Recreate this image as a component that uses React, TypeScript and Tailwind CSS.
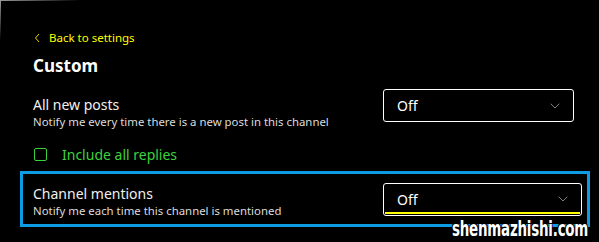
import { ChevronDown } from 'lucide-react'

function Select({ wide, focused }: { wide?: boolean; focused?: boolean }) {
  return (
    <div
      className={`relative flex h-[33px] items-center justify-between rounded-[3px] border border-white pl-[13px] pr-[10px] ${
        wide ? 'w-[199px]' : 'w-[191px]'
      }`}
    >
      <span className="text-[14px] text-white">Off</span>
      <ChevronDown className="h-[16px] w-[16px] text-[#a0a0a0]" strokeWidth={1.2} />
      {focused && (
        <div className="absolute bottom-[1px] left-[1px] right-[1px] h-[2px] bg-[#ffff00]" />
      )}
    </div>
  )
}

export default function App() {
  return (
    <div
      className="relative h-[242px] w-[599px] overflow-hidden bg-black text-white"
      style={{ fontFamily: '"Noto Sans", "Open Sans", sans-serif' }}
    >
      {/* window edge */}
      <div className="absolute left-0 top-0 h-px w-[80px] bg-gradient-to-r from-[#9a9a9a] to-transparent" />
      <div className="absolute left-0 top-0 h-[40px] w-px bg-gradient-to-b from-[#9a9a9a] to-transparent" />

      <div className="pt-[29px]">
        <div className="flex items-center gap-[8px] pl-[33px] text-[11.5px] text-[#ffff00]">
          <svg width="7" height="10" viewBox="0 0 7 10" className="ml-[1px]">
            <polyline points="5,1 1.5,5 5,9" fill="none" stroke="#e6d800" strokeWidth="1" />
          </svg>
          <span>Back to settings</span>
        </div>

        <h1 className="mt-[9px] pl-[33px] text-[17px] font-bold leading-[22px]">Custom</h1>

        <div className="mt-[12px] flex items-start pl-[33px]">
          <div className="w-[350px] pt-[7px]">
            <div className="text-[14px] leading-[18px] text-[#f0f0f0]">All new posts</div>
            <div className="text-[11.4px] leading-[16px] text-[#dcdcdc]">
              Notify me every time there is a new post in this channel
            </div>
          </div>
          <Select />
        </div>

        <label className="mt-[14px] flex items-center gap-[15px] pl-[34px] text-[14px] text-[#3cd23c]">
          <span className="block h-[13px] w-[13px] rounded-[2px] border border-[#3cd23c]" />
          <span>Include all replies</span>
        </label>

        <div className="ml-[20px] mt-[6px] flex h-[56px] w-[570px] items-center border-[3px] border-[#0d9be3] pl-[10px]">
          <div className="w-[350px] pt-[5px]">
            <div className="text-[14px] leading-[18px] text-[#f0f0f0]">Channel mentions</div>
            <div className="text-[11.4px] leading-[16px] text-[#dcdcdc]">
              Notify me each time this channel is mentioned
            </div>
          </div>
          <Select wide focused />
        </div>
      </div>

      <div
        className="absolute left-[452px] top-[217px] origin-left scale-x-[0.71] text-[21px] font-bold leading-[24px] tracking-[-0.3px] text-white"
        style={{
          fontFamily: '"DejaVu Sans Condensed", "Liberation Sans", sans-serif',
          textShadow: '1px 1px 0 #000, -1px -1px 0 #000, 1px -1px 0 #000, -1px 1px 0 #000',
        }}
      >
        shenmazhishi.com
      </div>
    </div>
  )
}
